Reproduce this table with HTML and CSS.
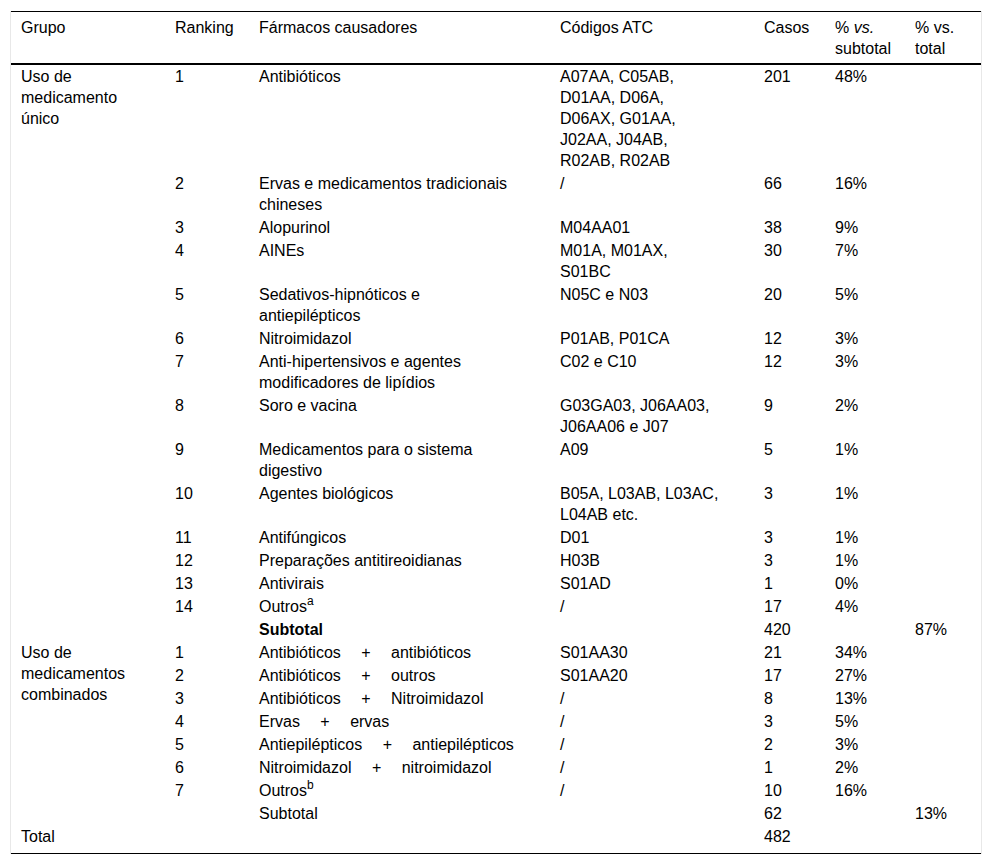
FILE: index.html
```html
<!DOCTYPE html>
<html lang="pt">
<head>
<meta charset="utf-8">
<title>Fármacos causadores</title>
<link rel="stylesheet" href="styles.css">
</head>
<body>
<div class="wrap">
<table class="tbl">
<colgroup>
<col class="c1"><col class="c2"><col class="c3"><col class="c4"><col class="c5"><col class="c6"><col class="c7">
</colgroup>
<thead>
<tr>
<th>Grupo</th>
<th>Ranking</th>
<th>Fármacos causadores</th>
<th>Códigos ATC</th>
<th>Casos</th>
<th class="narrow">% <i>vs.</i> subtotal</th>
<th class="narrow">% vs. total</th>
</tr>
</thead>
<tbody>
<tr><td rowspan="15">Uso de medicamento único</td><td>1</td><td>Antibióticos</td><td>A07AA, C05AB, D01AA, D06A, D06AX, G01AA, J02AA, J04AB, R02AB, R02AB</td><td>201</td><td>48%</td><td></td></tr>
<tr><td>2</td><td>Ervas e medicamentos tradicionais chineses</td><td>/</td><td>66</td><td>16%</td><td></td></tr>
<tr><td>3</td><td>Alopurinol</td><td>M04AA01</td><td>38</td><td>9%</td><td></td></tr>
<tr><td>4</td><td>AINEs</td><td>M01A, M01AX, S01BC</td><td>30</td><td>7%</td><td></td></tr>
<tr><td>5</td><td>Sedativos-hipnóticos e antiepilépticos</td><td>N05C e N03</td><td>20</td><td>5%</td><td></td></tr>
<tr><td>6</td><td>Nitroimidazol</td><td>P01AB, P01CA</td><td>12</td><td>3%</td><td></td></tr>
<tr><td>7</td><td>Anti-hipertensivos e agentes modificadores de lipídios</td><td>C02 e C10</td><td>12</td><td>3%</td><td></td></tr>
<tr><td>8</td><td>Soro e vacina</td><td>G03GA03, J06AA03, J06AA06 e J07</td><td>9</td><td>2%</td><td></td></tr>
<tr><td>9</td><td>Medicamentos para o sistema digestivo</td><td>A09</td><td>5</td><td>1%</td><td></td></tr>
<tr><td>10</td><td>Agentes biológicos</td><td>B05A, L03AB, L03AC, L04AB etc.</td><td>3</td><td>1%</td><td></td></tr>
<tr><td>11</td><td>Antifúngicos</td><td>D01</td><td>3</td><td>1%</td><td></td></tr>
<tr><td>12</td><td>Preparações antitireoidianas</td><td>H03B</td><td>3</td><td>1%</td><td></td></tr>
<tr><td>13</td><td>Antivirais</td><td>S01AD</td><td>1</td><td>0%</td><td></td></tr>
<tr><td>14</td><td>Outros<sup>a</sup></td><td>/</td><td>17</td><td>4%</td><td></td></tr>
<tr><td></td><td><b>Subtotal</b></td><td></td><td>420</td><td></td><td>87%</td></tr>
<tr><td rowspan="8">Uso de medicamentos combinados</td><td>1</td><td>Antibióticos <span class="plus">+</span> antibióticos</td><td>S01AA30</td><td>21</td><td>34%</td><td></td></tr>
<tr><td>2</td><td>Antibióticos <span class="plus">+</span> outros</td><td>S01AA20</td><td>17</td><td>27%</td><td></td></tr>
<tr><td>3</td><td>Antibióticos <span class="plus">+</span> Nitroimidazol</td><td>/</td><td>8</td><td>13%</td><td></td></tr>
<tr><td>4</td><td>Ervas <span class="plus">+</span> ervas</td><td>/</td><td>3</td><td>5%</td><td></td></tr>
<tr><td>5</td><td>Antiepilépticos <span class="plus">+</span> antiepilépticos</td><td>/</td><td>2</td><td>3%</td><td></td></tr>
<tr><td>6</td><td>Nitroimidazol <span class="plus">+</span> nitroimidazol</td><td>/</td><td>1</td><td>2%</td><td></td></tr>
<tr><td>7</td><td>Outros<sup>b</sup></td><td>/</td><td>10</td><td>16%</td><td></td></tr>
<tr><td></td><td>Subtotal</td><td></td><td>62</td><td></td><td>13%</td></tr>
<tr class="end"><td>Total</td><td></td><td></td><td></td><td>482</td><td></td><td></td></tr>
</tbody>
</table>
</div>
</body>
</html>
```

FILE: styles.css
```css
html, body {
  margin: 0;
  padding: 0;
  background: #fff;
}
body {
  font-family: "Liberation Sans", Arial, Helvetica, sans-serif;
  font-size: 16px;
  color: #000;
}
.wrap {
  margin: 11px 10px 0 10px;
  border-left: 1px solid #e8e8e8;
  border-right: 1px solid #e8e8e8;
}
.tbl {
  width: 100%;
  table-layout: fixed;
  border-collapse: collapse;
  line-height: 21px;
}
.c1 { width: 154px; }
.c2 { width: 84px; }
.c3 { width: 301px; }
.c4 { width: 204px; }
.c5 { width: 71px; }
.c6 { width: 80px; }
.c7 { width: 76px; }
.tbl thead tr {
  border-top: 1px solid #000;
  border-bottom: 2px solid #000;
}
.tbl th {
  font-weight: normal;
  text-align: left;
  vertical-align: top;
  padding: 5px 34px 4px 10px;
}
.tbl th.narrow {
  padding-right: 4px;
}
.tbl td {
  text-align: left;
  vertical-align: top;
  padding: 1px 34px 1px 10px;
}
.tbl tr.end td {
  padding-bottom: 6px;
}
.tbl tr.end {
  border-bottom: 1px solid #000;
}
.plus {
  margin: 0 16px;
}
sup {
  font-size: 12px;
  line-height: 0;
  vertical-align: 7px;
}
b { font-weight: bold; }
```
